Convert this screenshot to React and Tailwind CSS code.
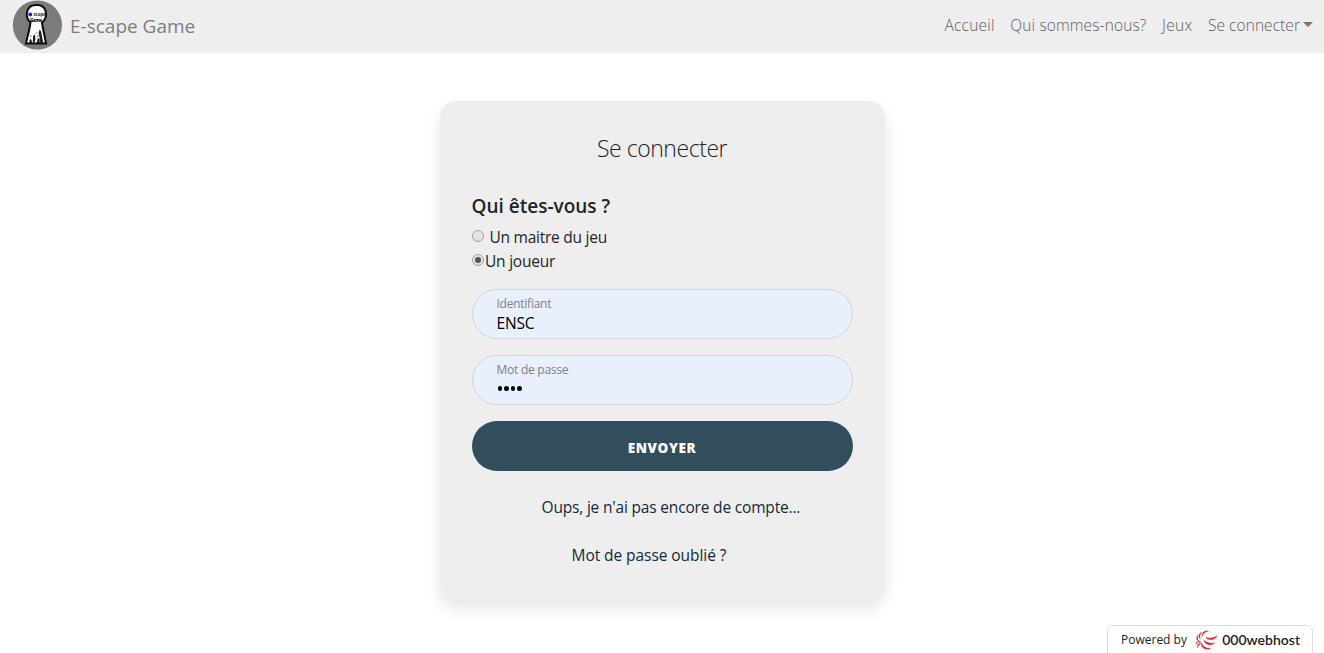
import React from "react";

function Logo() {
  return (
    <svg className="h-[50px] w-[50px] shrink-0" viewBox="0 0 50 50" aria-hidden="true">
      <circle cx="25.4" cy="25" r="24.6" fill="#7b7b7b" />
      <path
        d="M18.500 22.500 C12.500 17 13.500 5 24.500 5 C35.500 5 36.500 17 30 22.500 C31 30 32.800 36 34 43.500 L14 43.500 C15.500 36 17.500 30 18.500 22.500 Z"
        fill="#fff"
        stroke="#0c0c0c"
        strokeWidth="2"
      />
      <circle cx="18.300" cy="14.500" r="2" fill="#2b21a8" />
      <text x="21.500" y="15.800" fontSize="4.600" fontWeight="700" fontFamily="Open Sans, sans-serif" textLength="12" fill="#333">scape</text>
      <text x="18" y="22" fontSize="4.600" fontWeight="800" fontFamily="Open Sans, sans-serif" textLength="12" fill="#111">Game</text>
      <path d="M17.500 43 l0-3 1.200-1 1 1.500 .3 2.500 Z M20.800 43 l.3-7 1-1.500 1.200 1.800 0 3.700 -1 3 Z M24.500 43 l1.500-5 1.500 1 .3 4 Z M28.300 43 l-.8-6 -.8-4 1-3.500 1.400 2 .8 4.500 1.300 7 Z" fill="#1c1c1c" />
      <path d="M18 35.500 l1.500 1 M23.500 34 l1.500-1.500 M25 36.500 l2-1" stroke="#333" strokeWidth=".8" fill="none" />
    </svg>
  );
}

function HostMark() {
  return (
    <svg className="h-[20px] w-[24px] shrink-0" viewBox="0 0 24 20" fill="#d5212b" stroke="#d5212b" strokeLinejoin="round" aria-hidden="true">
      <path strokeWidth=".1" d="M15 1 C10 .2 7 3 8.500 7 C8.700 4 10.500 2 15 1 Z" />
      <path strokeWidth=".1" d="M8.500 1.800 C4.200 3.500 3.800 7 6.500 9.300 C5.500 6.500 6 4 8.500 1.800 Z" />
      <path strokeWidth=".1" d="M4.500 4.800 C1.200 7.500 2 10.300 5.800 11.500 C3.500 9.500 3 7.500 4.500 4.800 Z" />
      <path strokeWidth=".1" d="M1.500 14.500 C2 11.500 4.500 10.500 7.500 12 C4.800 11.900 3 12.500 1.500 14.500 Z" />
      <path strokeWidth=".3" d="M3.500 18 C3 14.500 4.800 12.800 8 13 C5.500 14 4.300 15.500 3.500 18 Z" />
      <path strokeWidth=".6" d="M7.500 13.500 C7 17 10 20 16.500 18.800 C12 18.300 9.200 16.800 7.500 13.500 Z" />
      <path strokeWidth=".6" d="M10 10.500 C11.500 15 17 16 20.500 13 C16 13.800 13 13 10 10.500 Z" />
      <path strokeWidth=".6" d="M12 7.500 C15 10.800 21 10 23 5.800 C19.500 8.400 15.500 8.600 12 7.500 Z" />
    </svg>
  );
}

function Radio({ checked }) {
  return (
    <span className="mb-[2px] flex h-3 w-3 shrink-0 items-center justify-center rounded-full border border-[#a2a2a2] bg-linear-to-b from-[#e6e6e6] to-[#dedede]">
      {checked && <span className="h-1.5 w-1.5 rounded-full bg-[#555]" />}
    </span>
  );
}

function Field({ label, children }) {
  return (
    <div className="mb-4 h-[50px] rounded-full border border-[#ced4da] bg-[#e8f0fe] px-6 pt-[5px]">
      <div className="h-[18px] text-[12px] leading-[18px] tracking-[-0.25px] text-[#7f8287]">{label}</div>
      {children}
    </div>
  );
}

export default function App() {
  return (
    <div className="relative flex h-[653px] flex-col overflow-hidden bg-white font-['Open_Sans','Noto_Sans',sans-serif] text-[15.500px] font-normal text-[#212529]">
      <nav className="flex h-[53px] shrink-0 items-center bg-[#eee] pr-[11px] pl-3 text-[#7d7d7d]">
        <div className="flex h-[53px] items-start">
          <Logo />
        </div>
        <span className="mb-[2px] ml-2 text-[19px] leading-[30px]">E-scape Game</span>
        <div className="mb-[3px] ml-auto flex gap-[15.500px] text-[15.500px] leading-6 font-light text-[#606060]">
          <a className="tracking-[0.250px]">Accueil</a>
          <a className="tracking-[0.130px]">Qui sommes-nous?</a>
          <a className="tracking-[0.300px]">Jeux</a>
          <a className="flex items-center tracking-[0.060px]">
            Se connecter
            <span className="mb-[2px] ml-[3px] border-x-[5px] border-t-[5px] border-x-transparent border-t-[#777]" />
          </a>
        </div>
      </nav>

      <main className="mx-auto mt-12 h-[499px] w-[445px] shrink-0 rounded-2xl bg-[#eee] px-8 pt-[31px] shadow-[0_8px_16px_rgba(0,0,0,0.1)]">
        <h1 className="mb-[30px] text-center text-[23px] leading-8 font-light tracking-[-0.450px]">Se connecter</h1>
        <h2 className="mb-[7px] text-[19px] leading-6 font-semibold">Qui êtes-vous ?</h2>
        <div className="flex h-6 items-center gap-[5px]">
          <Radio />
          <span className="mt-px ml-px tracking-[-0.250px]">Un maitre du jeu</span>
        </div>
        <div className="mb-4 flex h-6 items-center gap-px">
          <Radio checked />
          <span className="mt-px ml-[0.500px] tracking-[-0.220px]">Un joueur</span>
        </div>
        <Field label="Identifiant">
          <div className="pt-px text-[15.500px] leading-[18px] tracking-[-0.2px] text-black">ENSC</div>
        </Field>
        <Field label="Mot de passe">
          <div className="flex gap-[2px] pt-[7px] pl-px">
            <span className="h-[5px] w-[4.500px] rounded-full bg-black" />
            <span className="h-[5px] w-[4.500px] rounded-full bg-black" />
            <span className="h-[5px] w-[4.500px] rounded-full bg-black" />
            <span className="h-[5px] w-[4.500px] rounded-full bg-black" />
          </div>
        </Field>
        <button className="flex h-[50px] w-full items-center justify-center rounded-full bg-[#324d5c] pt-[5px] text-[13.500px] font-extrabold tracking-[0.600px] text-white">
          ENVOYER
        </button>
        <a className="mt-6 block pl-[70px] leading-6 tracking-[-0.180px] whitespace-nowrap text-[#14293a]">Oups, je n'ai pas encore de compte...</a>
        <a className="mt-6 block pl-[100px] leading-6 tracking-[-0.060px] whitespace-nowrap text-[#14293a]">Mot de passe oublié ?</a>
      </main>

      <a className="absolute right-[11px] bottom-[-6px] flex h-[34px] w-[206px] items-center rounded-t-md border border-[#ddd] bg-white pr-3 pb-[5px] pl-[13px] text-[12px] text-[#222]">
        <span className="pt-px whitespace-nowrap">Powered by</span>
        <span className="ml-auto flex items-center gap-1">
          <HostMark />
          <span className="font-['Lato',sans-serif] text-[14px] font-semibold">000webhost</span>
        </span>
      </a>
    </div>
  );
}
